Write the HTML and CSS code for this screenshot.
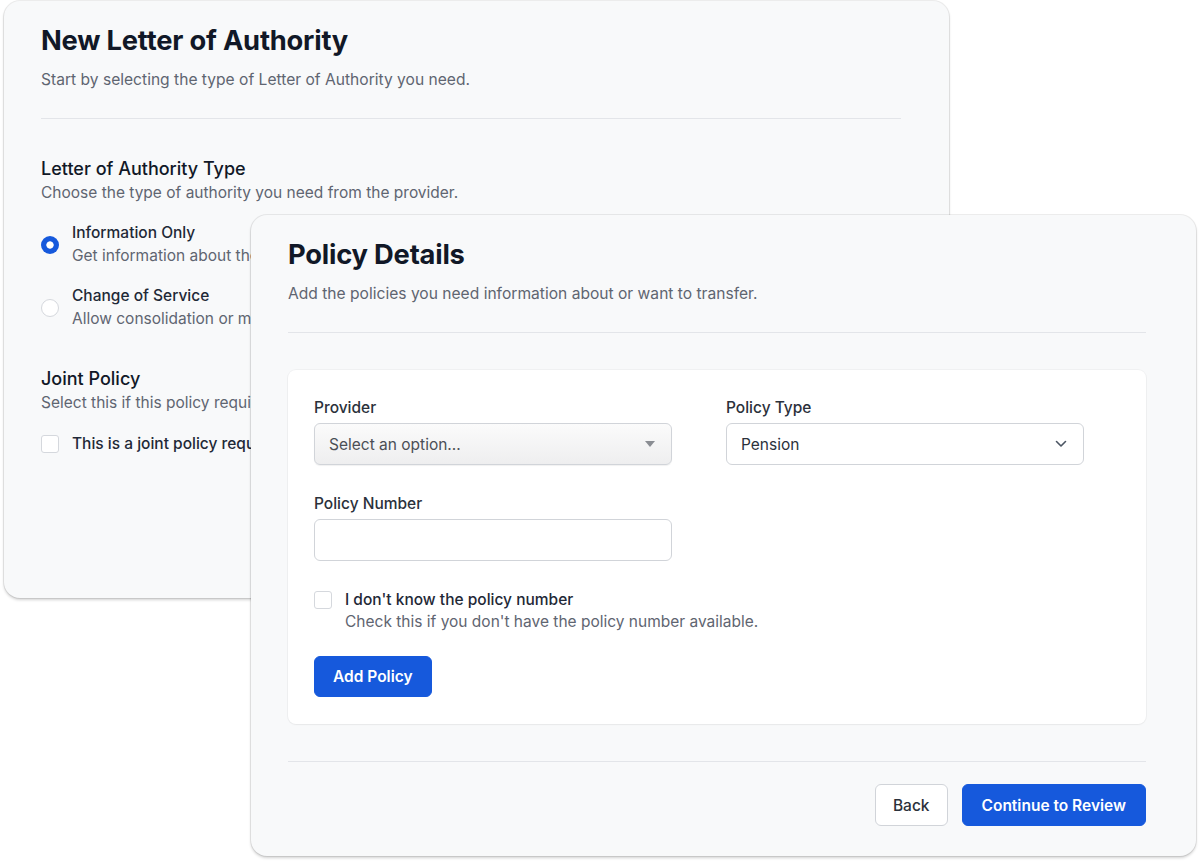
FILE: index.html
```html
<!DOCTYPE html>
<html lang="en">
<head>
<meta charset="utf-8">
<title>New Letter of Authority</title>
<link rel="stylesheet" href="styles.css">
</head>
<body>
<div class="stage">
  <section class="card card-back">
    <h1 class="card-title">New Letter of Authority</h1>
    <p class="card-sub">Start by selecting the type of Letter of Authority you need.</p>
    <hr class="divider">
    <div class="group">
      <h2 class="group-title">Letter of Authority Type</h2>
      <p class="group-sub">Choose the type of authority you need from the provider.</p>
      <div class="options">
        <label class="option">
          <span class="radio radio-on"></span>
          <span class="option-text">
            <span class="option-label">Information Only</span>
            <span class="option-desc">Get information about the policy without making any changes.</span>
          </span>
        </label>
        <label class="option">
          <span class="radio"></span>
          <span class="option-text">
            <span class="option-label">Change of Service</span>
            <span class="option-desc">Allow consolidation or movement of the policy to a new provider.</span>
          </span>
        </label>
      </div>
    </div>
    <div class="group group-joint">
      <h2 class="group-title">Joint Policy</h2>
      <p class="group-sub">Select this if this policy requires signatures from more than one person.</p>
      <label class="check-row">
        <span class="checkbox"></span>
        <span class="check-label">This is a joint policy requiring both signatures</span>
      </label>
    </div>
  </section>

  <section class="card card-front">
    <h1 class="card-title">Policy Details</h1>
    <p class="card-sub">Add the policies you need information about or want to transfer.</p>
    <hr class="divider">
    <div class="panel">
      <div class="fields">
        <div class="field">
          <span class="field-label">Provider</span>
          <div class="select select-native">
            <span class="placeholder">Select an option...</span>
            <svg class="tri" width="10" height="6" viewBox="0 0 10 6"><path d="M0 0h10L5 6z" fill="#8a8d93"/></svg>
          </div>
        </div>
        <div class="field">
          <span class="field-label">Policy Type</span>
          <div class="select">
            <span class="value">Pension</span>
            <svg class="chev" width="12" height="8" viewBox="0 0 12 8"><path d="M1.5 1.5 6 6l4.5-4.5" fill="none" stroke="#4b5563" stroke-width="1.6" stroke-linecap="round" stroke-linejoin="round"/></svg>
          </div>
        </div>
        <div class="field">
          <span class="field-label">Policy Number</span>
          <div class="input"></div>
        </div>
      </div>
      <label class="check-row check-row-front">
        <span class="checkbox"></span>
        <span class="check-text">
          <span class="check-label">I don't know the policy number</span>
          <span class="check-desc">Check this if you don't have the policy number available.</span>
        </span>
      </label>
      <button class="btn btn-primary">Add Policy</button>
    </div>
    <hr class="divider divider-footer">
    <div class="footer">
      <button class="btn btn-secondary">Back</button>
      <button class="btn btn-primary">Continue to Review</button>
    </div>
  </section>
</div>
</body>
</html>
```

FILE: styles.css
```css
* { box-sizing: border-box; }

html, body {
  margin: 0;
  padding: 0;
  background: #ffffff;
  font-family: "Inter", "Liberation Sans", sans-serif;
  color: #111827;
}

.stage {
  position: relative;
  width: 1200px;
  height: 864px;
  overflow: hidden;
  background: #ffffff;
}

.card {
  position: absolute;
  background: #f8f9fa;
  border-radius: 16px;
  box-shadow: 0 0 0 1px rgba(0, 0, 0, 0.07), 0 2px 3px rgba(0, 0, 0, 0.18);
  display: flex;
  flex-direction: column;
  overflow: hidden;
}

.card-back {
  left: 4px;
  top: 1px;
  width: 945px;
  height: 597px;
  padding: 24px 48px 0 37px;
}

.card-front {
  left: 251px;
  top: 215px;
  width: 945px;
  height: 641px;
  padding: 24px 50px 0 37px;
}

.card-title {
  margin: 0;
  font-size: 27.3px;
  line-height: 32px;
  font-weight: 700;
  color: #111827;
  letter-spacing: -0.2px;
}

.card-sub {
  margin: 13px 0 0;
  font-size: 15.6px;
  line-height: 20px;
  color: #5f6571;
}

.divider {
  border: 0;
  border-top: 1px solid #e3e5e9;
  margin: 28px 0 0;
  height: 0;
}

/* back card */
.group { margin-top: 38px; }
.group-title {
  margin: 0;
  font-size: 18px;
  line-height: 24px;
  font-weight: 500;
  color: #111827;
}
.group-sub {
  margin: 2px 0 0;
  font-size: 15.5px;
  line-height: 20px;
  color: #5f6571;
  white-space: nowrap;
}

.options {
  margin-top: 20px;
  display: flex;
  flex-direction: column;
  gap: 20px;
}

.option {
  display: flex;
  align-items: center;
  gap: 13px;
}

.option-text {
  display: flex;
  flex-direction: column;
  gap: 3px;
}

.option-label {
  font-size: 15.5px;
  line-height: 20px;
  font-weight: 500;
  color: #1f2937;
  white-space: nowrap;
}

.option-desc {
  font-size: 15.5px;
  line-height: 20px;
  color: #5f6571;
  white-space: nowrap;
}

.radio {
  width: 18px;
  height: 18px;
  border-radius: 50%;
  background: #ffffff;
  border: 1px solid #d5d8dd;
  flex-shrink: 0;
}

.radio-on {
  border: 0;
  background: radial-gradient(circle, #ffffff 0 3.3px, #1659dc 4px);
}

.group-joint { margin-top: 38px; }

.check-row {
  display: flex;
  align-items: center;
  gap: 13px;
  margin-top: 21px;
}

.checkbox {
  width: 18px;
  height: 18px;
  border-radius: 3px;
  border: 1px solid #d5d8dd;
  background: #ffffff;
  flex-shrink: 0;
}

.check-label {
  font-size: 15.5px;
  line-height: 20px;
  font-weight: 500;
  color: #1f2937;
  white-space: nowrap;
}

/* front card */
.panel {
  margin-top: 37px;
  background: #ffffff;
  border-radius: 8px;
  box-shadow: 0 0 0 1px rgba(0, 0, 0, 0.03), 0 1px 2px rgba(0, 0, 0, 0.04);
  padding: 28px 26px 27px 26px;
  display: flex;
  flex-direction: column;
  align-items: flex-start;
}

.fields {
  display: grid;
  grid-template-columns: 358px 358px;
  column-gap: 54px;
  row-gap: 29px;
}

.field {
  display: flex;
  flex-direction: column;
  gap: 5px;
}

.field-label {
  font-size: 15.5px;
  line-height: 20px;
  font-weight: 500;
  color: #2b313b;
}

.select, .input {
  height: 42px;
  border: 1px solid #d1d4d9;
  border-radius: 6px;
  background: #ffffff;
  display: flex;
  align-items: center;
  justify-content: space-between;
  padding: 0 14px;
}

.select-native {
  background: linear-gradient(#fbfbfb, #eeeeef);
  box-shadow: 0 1px 1px rgba(0, 0, 0, 0.06);
  padding: 0 16px 0 14px;
}

.placeholder {
  font-size: 15.5px;
  color: #4b4f56;
}

.value {
  font-size: 15.5px;
  color: #2b313b;
}

.chev { margin-right: 2px; }

.check-row-front {
  margin-top: 29px;
  align-items: flex-start;
}

.check-row-front .checkbox {
  margin-top: 1px;
}

.check-text {
  display: flex;
  flex-direction: column;
  gap: 2px;
}

.check-desc {
  font-size: 15.5px;
  line-height: 20px;
  color: #5f6571;
}

.btn {
  font-family: inherit;
  font-size: 15.5px;
  font-weight: 600;
  height: 42px;
  padding: 0 19px;
  border-radius: 6px;
  cursor: pointer;
}

.btn-primary {
  background: #1659dc;
  color: #ffffff;
  border: 1px solid #1659dc;
}

.panel .btn-primary {
  margin-top: 24px;
  height: 41px;
  padding: 0 18px;
}

.btn-secondary {
  background: #ffffff;
  color: #2b313b;
  border: 1px solid #d1d4d9;
  font-weight: 500;
  padding: 0 17px;
}

.divider-footer { margin-top: 37px; }

.footer {
  margin-top: 22px;
  display: flex;
  justify-content: flex-end;
  gap: 14px;
}
```
